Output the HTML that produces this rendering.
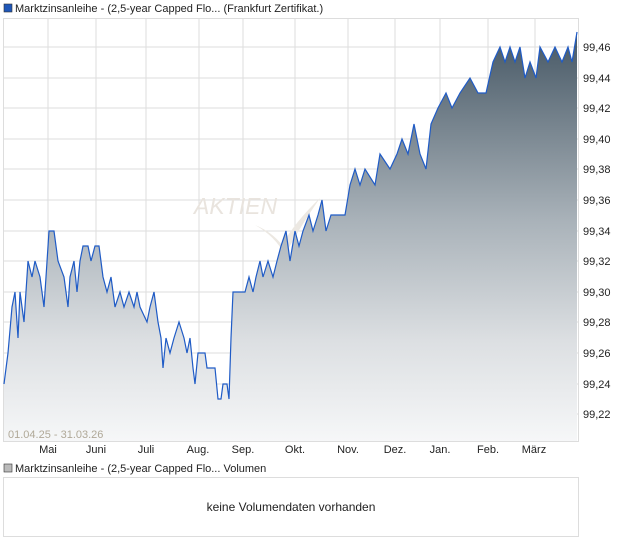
<!DOCTYPE html>
<html><head><meta charset="utf-8"><style>
body{margin:0;width:620px;height:546px;background:#fff;font-family:"Liberation Sans",sans-serif;overflow:hidden}
</style></head><body>
<svg width="620" height="546" xmlns="http://www.w3.org/2000/svg" font-family="Liberation Sans, sans-serif">
<defs>
<linearGradient id="g" gradientUnits="userSpaceOnUse" x1="0" y1="40" x2="0" y2="441">
<stop offset="0" stop-color="#4a5b68"/>
<stop offset="0.45" stop-color="#a9b2b9"/>
<stop offset="0.75" stop-color="#dcdfe2"/>
<stop offset="1" stop-color="#f6f7f8"/>
</linearGradient>
</defs>
<rect x="4" y="4" width="8" height="8" fill="#1f57b8" stroke="#333" stroke-width="0.6"/>
<text x="15" y="12" font-size="11" fill="#222">Marktzinsanleihe - (2,5-year Capped Flo... (Frankfurt Zertifikat.)</text>
<rect x="3.5" y="18.5" width="575" height="423" fill="#fff" stroke="#ddd"/>
<g stroke="#ddd" stroke-width="1">
<path d="M48 19V441M96 19V441M146 19V441M199 19V441M243 19V441M295 19V441M348 19V441M395 19V441M440 19V441M488 19V441M535 19V441"/>
<path d="M4 47H578M4 78H578M4 108H578M4 139H578M4 169H578M4 200H578M4 231H578M4 261H578M4 292H578M4 322H578M4 353H578M4 384H578M4 414H578"/>
</g>
<text x="194" y="214" font-size="23" font-style="italic" fill="#e9e4de">AKTIEN</text>
<path d="M255 225 Q272 232 282 245 Q295 222 320 198 Q298 230 285 255 Q275 236 255 225Z" fill="#ece8e2"/>
<path fill="url(#g)" stroke="none" d="M4 384 L8 353 L12 307 L15 292 L18 338 L20 292 L24 322 L28 261 L32 277 L35 261 L40 277 L44 307 L46 277 L49 231 L54 231 L58 261 L64 277 L68 307 L70 277 L74 261 L77 292 L80 261 L83 246 L88 246 L91 261 L95 246 L99 246 L103 277 L107 292 L111 277 L115 307 L120 292 L124 307 L129 292 L134 307 L137 292 L140 307 L147 322 L150 307 L154 292 L158 322 L161 338 L163 368 L166 338 L170 353 L174 338 L179 322 L184 338 L187 353 L190 338 L193 368 L195 384 L198 353 L205 353 L207 368 L215 368 L218 399 L221 399 L223 384 L227 384 L229 399 L231 338 L233 292 L245 292 L249 277 L253 292 L256 277 L260 261 L263 277 L268 261 L273 277 L277 261 L281 246 L286 231 L290 261 L295 231 L299 246 L303 231 L309 215 L313 231 L318 215 L322 200 L326 231 L331 215 L345 215 L350 185 L355 169 L360 185 L365 169 L375 185 L380 154 L390 169 L397 154 L402 139 L408 154 L414 124 L420 154 L426 169 L431 124 L438 108 L446 93 L452 108 L460 93 L470 78 L478 93 L486 93 L493 62 L500 47 L505 62 L510 47 L515 62 L520 47 L525 78 L530 62 L536 78 L540 47 L548 62 L555 47 L562 62 L568 47 L572 62 L577 32 L577 441 L4 441Z"/>
<path fill="none" stroke="#1f5bc6" stroke-width="1.2" d="M4 384 L8 353 L12 307 L15 292 L18 338 L20 292 L24 322 L28 261 L32 277 L35 261 L40 277 L44 307 L46 277 L49 231 L54 231 L58 261 L64 277 L68 307 L70 277 L74 261 L77 292 L80 261 L83 246 L88 246 L91 261 L95 246 L99 246 L103 277 L107 292 L111 277 L115 307 L120 292 L124 307 L129 292 L134 307 L137 292 L140 307 L147 322 L150 307 L154 292 L158 322 L161 338 L163 368 L166 338 L170 353 L174 338 L179 322 L184 338 L187 353 L190 338 L193 368 L195 384 L198 353 L205 353 L207 368 L215 368 L218 399 L221 399 L223 384 L227 384 L229 399 L231 338 L233 292 L245 292 L249 277 L253 292 L256 277 L260 261 L263 277 L268 261 L273 277 L277 261 L281 246 L286 231 L290 261 L295 231 L299 246 L303 231 L309 215 L313 231 L318 215 L322 200 L326 231 L331 215 L345 215 L350 185 L355 169 L360 185 L365 169 L375 185 L380 154 L390 169 L397 154 L402 139 L408 154 L414 124 L420 154 L426 169 L431 124 L438 108 L446 93 L452 108 L460 93 L470 78 L478 93 L486 93 L493 62 L500 47 L505 62 L510 47 L515 62 L520 47 L525 78 L530 62 L536 78 L540 47 L548 62 L555 47 L562 62 L568 47 L572 62 L577 32"/>
<g font-size="11" fill="#222">
<text x="583" y="51">99,46</text><text x="583" y="82">99,44</text><text x="583" y="112">99,42</text><text x="583" y="143">99,40</text><text x="583" y="173">99,38</text><text x="583" y="204">99,36</text><text x="583" y="235">99,34</text><text x="583" y="265">99,32</text><text x="583" y="296">99,30</text><text x="583" y="326">99,28</text><text x="583" y="357">99,26</text><text x="583" y="388">99,24</text><text x="583" y="418">99,22</text>
</g>
<text x="8" y="438" font-size="11" fill="#b0a898">01.04.25 - 31.03.26</text>
<g font-size="11" fill="#222" text-anchor="middle">
<text x="48" y="453">Mai</text><text x="96" y="453">Juni</text><text x="146" y="453">Juli</text><text x="198" y="453">Aug.</text><text x="243" y="453">Sep.</text><text x="295" y="453">Okt.</text><text x="348" y="453">Nov.</text><text x="395" y="453">Dez.</text><text x="440" y="453">Jan.</text><text x="488" y="453">Feb.</text><text x="534" y="453">März</text>
</g>
<rect x="4" y="464" width="8" height="8" fill="#bbb" stroke="#333" stroke-width="0.6"/>
<text x="15" y="472" font-size="11" fill="#222">Marktzinsanleihe - (2,5-year Capped Flo... Volumen</text>
<rect x="3.5" y="477.5" width="575" height="59" fill="#fff" stroke="#ddd"/>
<text x="291" y="511" font-size="12" fill="#222" text-anchor="middle">keine Volumendaten vorhanden</text>
</svg>
</body></html>
